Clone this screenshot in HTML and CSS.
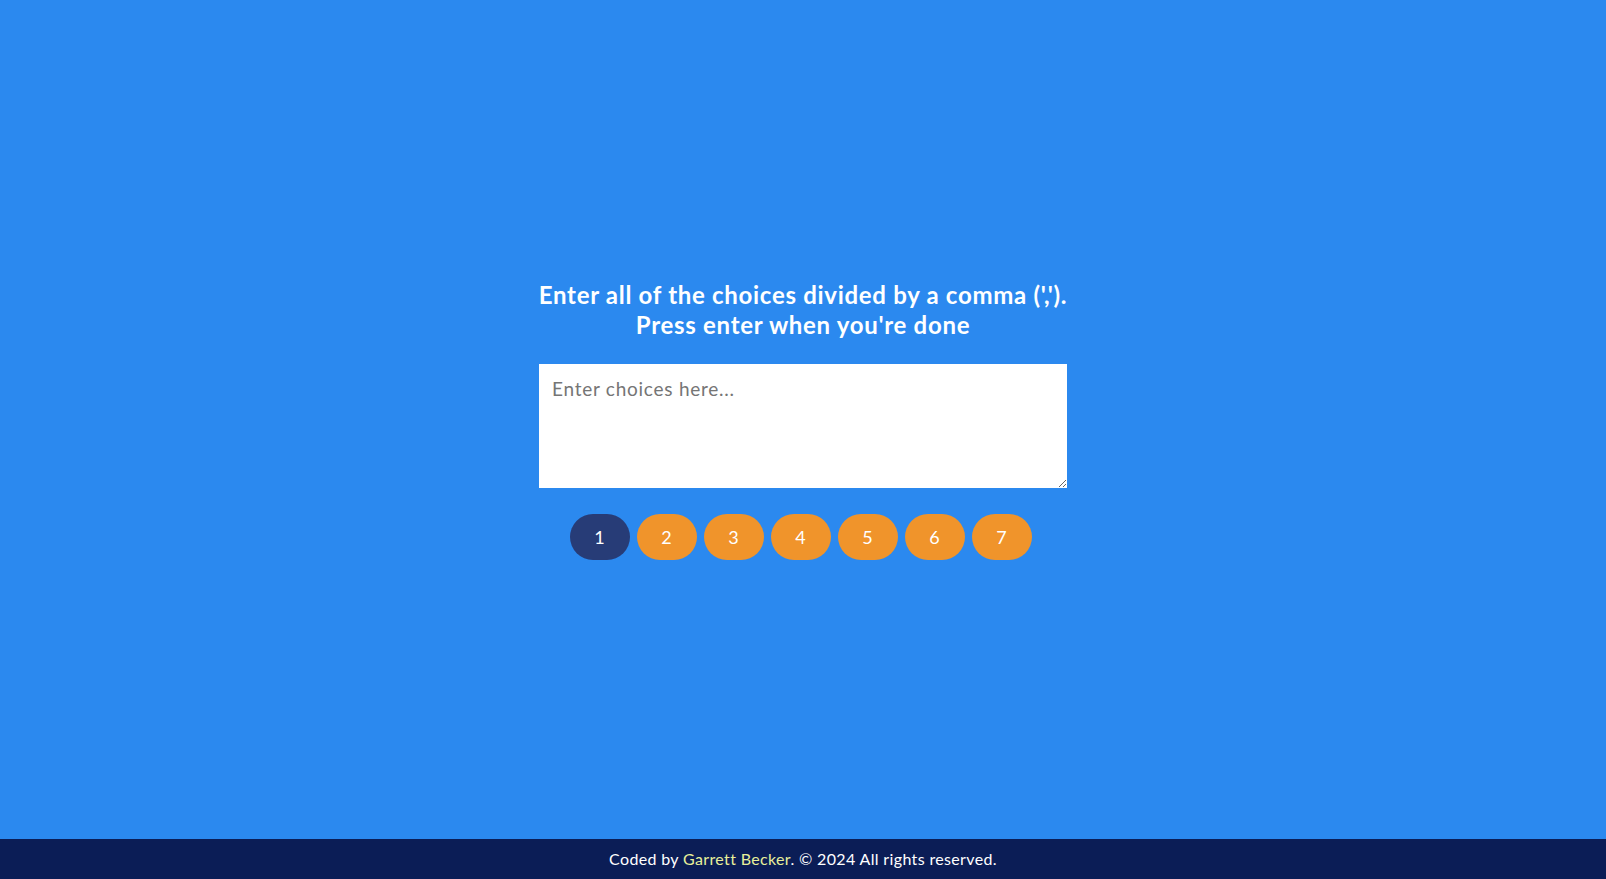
FILE: index.html
```html
<!DOCTYPE html>
<html lang="en">
<head>
<meta charset="utf-8">
<title>Choice Picker</title>
<link rel="stylesheet" href="styles.css">
</head>
<body>
<main class="main">
  <div class="container">
    <h3 class="title">Enter all of the choices divided by a comma (',').<br>Press enter when you're done</h3>
    <textarea class="choices" placeholder="Enter choices here..."></textarea>
    <div class="tags">
      <button class="tag active">1</button>
      <button class="tag">2</button>
      <button class="tag">3</button>
      <button class="tag">4</button>
      <button class="tag">5</button>
      <button class="tag">6</button>
      <button class="tag">7</button>
    </div>
  </div>
</main>
<footer class="footer">
  <p class="footer-text">Coded by <a class="link" href="#">Garrett Becker</a>. © 2024 All rights reserved.</p>
</footer>
</body>
</html>
```
FILE: styles.css
```css
* { box-sizing: border-box; }
html, body { height: 100%; }
body {
  margin: 0;
  background: #2b89ef;
  font-family: "Lato", "Open Sans", sans-serif;
  color: #fff;
  display: flex;
  flex-direction: column;
}
.main {
  flex: 1;
  display: flex;
  align-items: center;
  justify-content: center;
}
.container {
  width: 528px;
  display: flex;
  flex-direction: column;
  align-items: center;
}
.title {
  margin: 0 0 24px;
  font-size: 24px;
  font-weight: 700;
  line-height: 30px;
  letter-spacing: 0.7px;
  text-align: center;
  white-space: nowrap;
}
.choices {
  width: 528px;
  height: 124px;
  border: none;
  padding: 13px 13px;
  font-family: "Lato", "Open Sans", sans-serif;
  font-size: 19px;
  letter-spacing: 0.75px;
  color: #333;
  display: block;
  margin: 0;
  resize: vertical;
}
.choices::placeholder { color: #757575; }
.tags {
  margin-top: 26px;
  padding-right: 5px;
  display: flex;
  gap: 7px;
  justify-content: center;
}
.tag {
  width: 60px;
  height: 46px;
  border: none;
  border-radius: 23px;
  background: #f0942b;
  color: #fff;
  font-family: "Lato", "Open Sans", sans-serif;
  font-size: 18px;
  padding: 0;
}
.tag.active { background: #273c77; }
.footer {
  height: 40px;
  flex: none;
  background: #0b1d56;
  display: flex;
  align-items: center;
  justify-content: center;
}
.footer-text {
  margin: 0 0 1px;
  font-size: 16px;
  letter-spacing: 0.35px;
  text-align: center;
}
.link {
  color: #e8f09a;
  text-decoration: none;
}
```
